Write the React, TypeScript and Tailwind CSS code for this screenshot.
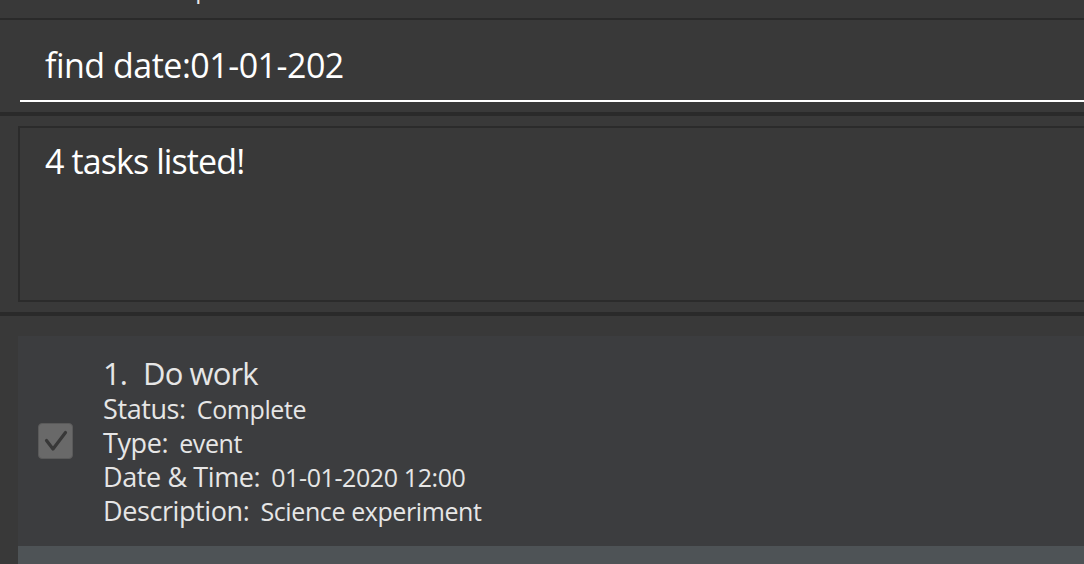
import React from 'react';

const font = { fontFamily: '"Open Sans", "Noto Sans", sans-serif' };

const details = [
  { label: 'Status:', value: 'Complete' },
  { label: 'Type:', value: 'event' },
  { label: 'Date & Time:', value: '01-01-2020 12:00' },
  { label: 'Description:', value: 'Science experiment' },
];

const CheckBox: React.FC = () => (
  <div className="w-[35px] h-[36px] rounded-[4px] bg-[#696969] border border-[#5a5a5a] flex items-center justify-center shrink-0">
    <svg width="26" height="24" viewBox="0 0 26 24">
      <path d="M3.5 11.5 L10 20 L22.5 3.5" fill="none" stroke="#383838" strokeWidth="3.2" strokeLinejoin="round" strokeLinecap="round" />
    </svg>
  </div>
);

const App: React.FC = () => {
  return (
    <div className="w-[1084px] h-[564px] overflow-hidden bg-[#393939] text-white" style={font}>
      {/* Menu bar (cut off at top) */}
      <div className="h-[18px] overflow-hidden">
        <div className="flex mt-[-28px] pl-[20px] text-[24px] leading-[34px] text-[#e8e8e8]">
          <span>File</span>
          <span className="ml-[100px]">Help</span>
        </div>
      </div>
      <div className="h-[2px] bg-[#2a2a2a]" />

      {/* Command box */}
      <div className="h-[92px] pl-[20px] pt-[22px]">
        <div className="-mr-4 border-b-2 border-white pb-[12px] pl-[25px] text-[34px] leading-[46px] tracking-[-0.5px]">
          find date:01-01-202
        </div>
      </div>
      <div className="h-[4px] bg-[#2a2a2a]" />

      {/* Result display */}
      <div className="h-[196px] pl-[18px] pt-[10px]">
        <div className="-mr-4 h-[176px] border-2 border-[#2b2b2b] pl-[25px] pt-[10px] text-[34px] leading-[46px] tracking-[-0.9px]">
          4 tasks listed!
        </div>
      </div>
      <div className="h-[4px] bg-[#2a2a2a]" />

      {/* Task list */}
      <div className="pl-[18px] pt-[20px]">
        <div className="h-[210px] bg-[#3c3d3f] flex items-center pl-[20px]">
          <CheckBox />
          <div className="ml-[30px] text-[#e6e6e6]">
            <div className="text-[31px] leading-[38px] tracking-[-0.9px]">
              <span>1.</span>
              <span className="ml-[16px]">Do work</span>
            </div>
            {details.map((d) => (
              <div key={d.label} className="flex items-baseline h-[34px] leading-[34px] tracking-[-0.4px]">
                <span className="text-[27px]">{d.label}</span>
                <span className="ml-[11px] text-[25px]">{d.value}</span>
              </div>
            ))}
          </div>
        </div>
        <div className="h-[40px] bg-[#4e5356]" />
      </div>
    </div>
  );
};

export default App;
